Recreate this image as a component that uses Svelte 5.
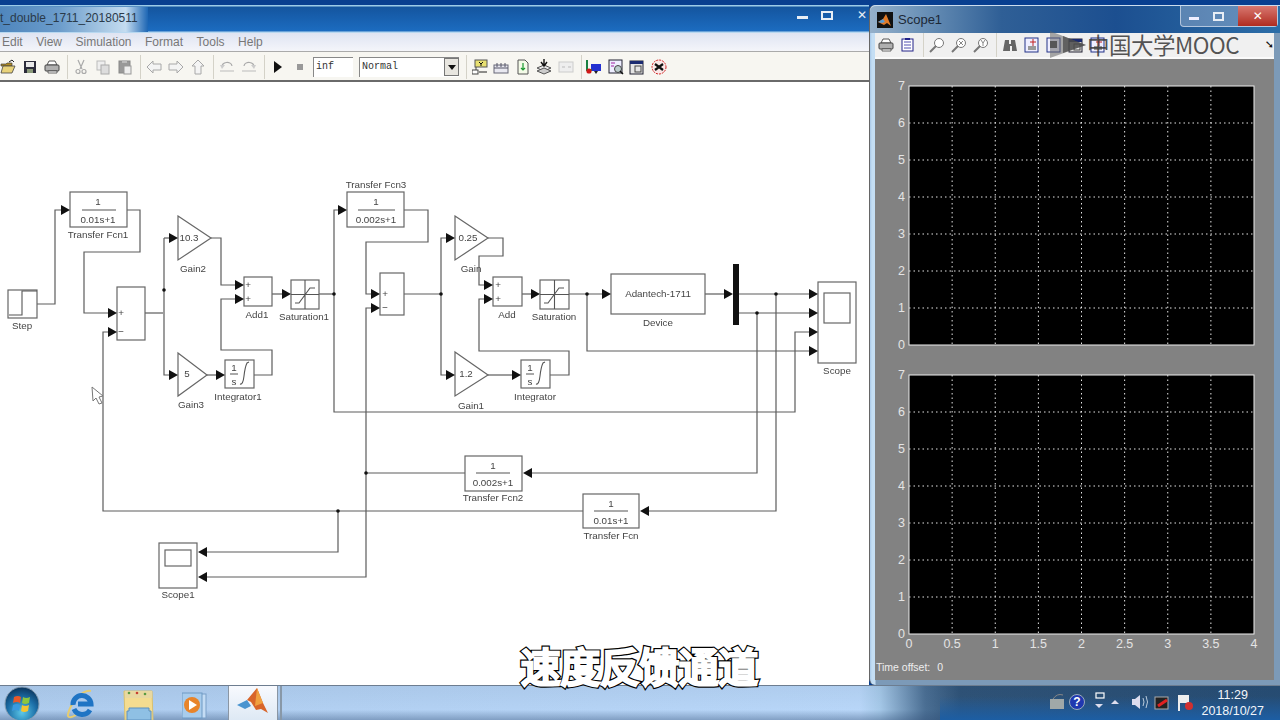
<script lang="ts">
	const svg = (body: string, w = 16, h = 16) =>
		`<svg width="${w}" height="${h}" viewBox="0 0 ${w} ${h}">${body}</svg>`;

	const menuItems = ['Edit', 'View', 'Simulation', 'Format', 'Tools', 'Help'];

	const icons = {
		open: svg('<path d="M1 5h5l1-1h5v3H1z" fill="#b08a20" stroke="#444" stroke-width=".7"/><path d="M1 14l2-7h12l-3 7z" fill="#e8d27a" stroke="#444" stroke-width=".8"/><path d="M9 3l3-2 2 2" fill="none" stroke="#222"/>'),
		save: svg('<rect x="2" y="2" width="12" height="12" fill="#2b2b3a"/><rect x="4" y="3" width="8" height="5" fill="#e8e8e8"/><rect x="5" y="10" width="6" height="4" fill="#8a9a7a"/>'),
		print: svg('<path d="M5 2h6l2 4H3z" fill="#fff" stroke="#444" stroke-width=".9"/><rect x="1" y="6" width="14" height="6" rx="1" fill="#b0b0b0" stroke="#444"/><path d="M4 12h9v2H4z" fill="#fff" stroke="#444" stroke-width=".8"/>'),
		cut: svg('<path d="M5 1l4 9M11 1L7 10" stroke="#aaa" stroke-width="1.2" fill="none"/><circle cx="5" cy="12.500" r="2" fill="none" stroke="#aaa" stroke-width="1.2"/><circle cx="11" cy="12.500" r="2" fill="none" stroke="#aaa" stroke-width="1.2"/>'),
		copy: svg('<rect x="2" y="2" width="8" height="9" fill="#eee" stroke="#bbb"/><rect x="6" y="6" width="8" height="9" fill="#ddd" stroke="#aaa"/>'),
		paste: svg('<rect x="2" y="2" width="11" height="12" fill="#999" stroke="#888"/><rect x="5" y="1" width="5" height="3" fill="#bbb"/><rect x="7" y="7" width="7" height="8" fill="#eee" stroke="#999"/>'),
		back: svg('<path d="M1 8l6-6v3h8v6H7v3z" fill="#f4f4f4" stroke="#a8a8a8"/>'),
		forward: svg('<path d="M15 8L9 2v3H1v6h8v3z" fill="#f4f4f4" stroke="#a8a8a8"/>'),
		up: svg('<path d="M8 1l6 6h-3v8H5V7H2z" fill="#f4f4f4" stroke="#a8a8a8"/>'),
		undo: svg('<path d="M3 8a5 4 0 0 1 10-1" fill="none" stroke="#aaa" stroke-width="1.2"/><path d="M1 6h5L3 10z" fill="#ccc"/><path d="M1 12h14" stroke="#bbb"/>'),
		redo: svg('<path d="M13 8A5 4 0 0 0 3 7" fill="none" stroke="#aaa" stroke-width="1.2"/><path d="M15 6h-5l3 4z" fill="#ccc"/><path d="M1 12h14" stroke="#bbb"/>'),
		play: svg('<path d="M4 2l8 6-8 6z" fill="#111"/>'),
		stop: svg('<rect x="5" y="5" width="6" height="6" fill="#999"/>'),
		library: svg('<rect x="3" y="1" width="12" height="7" fill="#e8e070" stroke="#555"/><path d="M7 3l2 2 2-2M9 5v2" stroke="#111" fill="none"/><rect x="0" y="11" width="6" height="4" fill="#fff" stroke="#444"/><path d="M7 13h8" stroke="#222"/><path d="M4 8v3" stroke="#444"/>'),
		explorer: svg('<rect x="1" y="6" width="14" height="8" fill="#e8e8f0" stroke="#667"/><path d="M1 9h14M4 4v4M8 4v4M12 4v4" stroke="#556" fill="none"/>'),
		update: svg('<path d="M3 1h7l3 3v11H3z" fill="#f4fbe8" stroke="#555"/><path d="M8 4v7M6 9l2 2 2-2" stroke="#1a9a30" fill="none" stroke-width="1.2"/>'),
		build: svg('<path d="M8 6l7 3-7 3-7-3z" fill="#e8e8e8" stroke="#555"/><path d="M8 9l7 3-7 3-7-3z" fill="#ccc" stroke="#555"/><path d="M8 0v6M5 3l3 4 3-4" stroke="#111" fill="none" stroke-width="1.4"/>'),
		grid: svg('<rect x="1" y="3" width="14" height="10" fill="#eee" stroke="#ccc"/><path d="M4 8h3M10 8h3" stroke="#bbb"/>'),
		model: svg('<rect x="5" y="5" width="10" height="7" fill="#2330d0"/><path d="M1 1v10h5" stroke="#1a8040" stroke-width="2" fill="none"/><circle cx="3" cy="12" r="2.600" fill="#d01818"/><path d="M8 12l2 3 2-3z" fill="#222"/>'),
		search: svg('<rect x="1" y="1" width="13" height="13" fill="#eef" stroke="#223"/><path d="M3 4h4M3 7h3" stroke="#a020a0"/><circle cx="10" cy="10" r="3.500" fill="#bcc" stroke="#444"/><path d="M12 12l3 3" stroke="#111" stroke-width="1.500"/>'),
		settings: svg('<rect x="1" y="2" width="13" height="13" fill="#e4e4e4" stroke="#223"/><rect x="1" y="2" width="13" height="3" fill="#1a2a70"/><rect x="6" y="7" width="6" height="6" fill="none" stroke="#444"/>'),
		debug: svg('<circle cx="8" cy="8" r="7" fill="#fbe8e8" stroke="#d02020" stroke-dasharray="2 1"/><path d="M4 5l8 6M12 5l-8 6" stroke="#111" stroke-width="2.200"/>'),
		sprint: svg('<rect x="2" y="2" width="11" height="12" fill="#fff" stroke="#222288"/><path d="M4 5h7M4 8h7M4 11h7" stroke="#5050b0"/><rect x="5" y="1" width="5" height="2" fill="#222288"/>'),
		zoomIn: svg('<circle cx="10" cy="6" r="4.500" fill="#fff" stroke="#777"/><path d="M7 9l-6 6" stroke="#777" stroke-width="2"/>'),
		zoomX: svg('<circle cx="10" cy="6" r="4.500" fill="#fff" stroke="#777"/><path d="M7 9l-6 6" stroke="#777" stroke-width="2"/><path d="M8 4l4 4M12 4l-4 4" stroke="#888"/>'),
		zoomY: svg('<circle cx="10" cy="6" r="4.500" fill="#fff" stroke="#777"/><path d="M7 9l-6 6" stroke="#777" stroke-width="2"/><path d="M8 3l2 3 2-3M10 6v3" stroke="#888" fill="none"/>'),
		binoculars: svg('<path d="M3 3h4v4h2V3h4l2 11h-5V9H8v5H1z" fill="#666"/>'),
		params: svg('<rect x="1" y="1" width="13" height="14" fill="#eef" stroke="#223388"/><path d="M6 5h6M9 2v7" stroke="#c02020"/><rect x="4" y="9" width="8" height="4" fill="#999"/>'),
		saveAxes: svg('<rect x="1" y="1" width="13" height="14" fill="#eef" stroke="#223388"/><rect x="4" y="4" width="7" height="7" fill="#444"/>')
	};

	const groups = [
		['open', 'save', 'print'],
		['cut', 'copy', 'paste'],
		['back', 'forward', 'up'],
		['undo', 'redo'],
		['play', 'stop']
	];
	const rightGroups = [
		['library', 'explorer', 'update', 'build', 'grid'],
		['model', 'search', 'settings', 'debug']
	];
	const scopeGroups = [
		['print', 'sprint'],
		['zoomIn', 'zoomX', 'zoomY'],
		['binoculars', 'params', 'saveAxes', 'settings', 'params']
	];

	// diagram, in screen coordinates
	const boxes = [
		[70, 192, 57, 35], [8, 290, 29, 28], [117, 287, 28, 53], [244, 277, 28, 29],
		[291, 280, 28, 29], [225, 360, 29, 28], [347, 192, 57, 35], [380, 273, 24, 42],
		[493, 277, 29, 29], [540, 280, 29, 29], [521, 360, 29, 28], [611, 274, 94, 40],
		[818, 282, 38, 81], [824, 293, 26, 30], [465, 456, 57, 35], [583, 494, 56, 34],
		[159, 543, 38, 45], [165, 550, 26, 16]
	];
	const triangles = [
		'178,216 211,238 178,260', '178,353 207,375 178,396',
		'455,216 488,238 455,260', '455,352 488,375 455,396'
	];
	const wires = [
		'37,304 55,304 55,210 62,210',
		'127,210 140,210 140,252 84,252 84,313 110,313',
		'145,313 163,313',
		'164,238 170,238', '170,375 164,375 164,238',
		'211,238 221,238 221,285 236,285',
		'236,299 221,299 221,350 272,350 272,375 254,375',
		'207,375 217,375',
		'272,294 283,294',
		'319,294 334,294',
		'340,210 334,210 334,412 795,412 795,332 810,332',
		'404,210 428,210 428,242 366,242 366,294 372,294',
		'372,308 366,308 366,577 206,577',
		'404,294 441,294',
		'447,238 441,238 441,375 447,375',
		'488,238 503,238 503,256 479,256 479,285 485,285',
		'485,299 479,299 479,351 569,351 569,375 550,375',
		'488,375 513,375',
		'522,294 532,294',
		'569,294 603,294',
		'587,294 587,351 809,351',
		'705,294 724,294',
		'738,294 809,294',
		'738,313 809,313',
		'757,313 757,473 531,473',
		'465,473 366,473',
		'776,294 776,511 648,511',
		'583,511 103,511 103,332 110,332',
		'338,511 338,552 206,552'
	];
	const rightArrows = [
		[70, 210], [117, 313], [117, 332], [178, 238], [178, 375], [244, 285], [244, 299],
		[225, 375], [291, 294], [347, 210], [380, 294], [380, 308], [455, 238], [455, 375],
		[493, 285], [493, 299], [521, 375], [540, 294], [611, 294], [733, 294],
		[818, 294], [818, 313], [818, 332], [818, 351]
	];
	const leftArrows = [[523, 473], [640, 511], [198, 552], [198, 577]];
	const dots = [
		[164, 290], [334, 294], [441, 294], [587, 294], [776, 294], [757, 313], [366, 473], [338, 511]
	];
	const rules = [[82, 116, 210], [358, 395, 210], [476, 510, 473], [594, 628, 511]];
	const labels = [
		['Step', 22, 329], ['Transfer Fcn1', 98, 238], ['Gain2', 193, 272], ['Gain3', 191, 408],
		['Add1', 257, 318], ['Saturation1', 304, 320], ['Integrator1', 238, 400],
		['Transfer Fcn3', 376, 188], ['Gain', 471, 272], ['Add', 507, 318], ['Saturation', 554, 320],
		['Gain1', 471, 409], ['Integrator', 535, 400], ['Device', 658, 326], ['Scope', 837, 374],
		['Transfer Fcn2', 493, 501], ['Transfer Fcn', 611, 539], ['Scope1', 178, 598],
		['1', 98, 205], ['0.01s+1', 98, 223], ['1', 376, 205], ['0.002s+1', 376, 223],
		['1', 493, 469], ['0.002s+1', 493, 486], ['1', 611, 507], ['0.01s+1', 611, 524],
		['10.3', 189, 241], ['5', 187, 377], ['0.25', 468, 241], ['1.2', 466, 377],
		['Adantech-1711', 658, 297]
	];
	const signs = [
		['+', 121, 316], ['−', 121, 335], ['+', 248, 288], ['+', 248, 302],
		['+', 385, 297], ['−', 385, 311], ['+', 498, 288], ['+', 498, 302]
	];

	const xTicks = [0, 0.5, 1, 1.5, 2, 2.5, 3, 3.5, 4];
	const yTicks = [0, 1, 2, 3, 4, 5, 6, 7];
	const plotWidth = 345;
	const plotHeight = 259;
	const px = (t: number) => 34 + (t / 4) * plotWidth;
	const py = (v: number) => 10 + plotHeight - (v / 7) * plotHeight;
</script>

<div class="desktop">
	<section class="model">
		<header class="titlebar">
			<span class="glow">t_double_1711_20180511</span>
			<div class="controls">
				<span class="min"></span>
				<span class="max"></span>
				<span class="close">✕</span>
			</div>
		</header>
		<nav class="menu">
			{#each menuItems as item}
				<span>{item}</span>
			{/each}
		</nav>
		<div class="toolbar">
			{#each groups as group, i}
				{#if i > 0}<i class="sep"></i>{/if}
				{#each group as name}
					<span class="tool">{@html icons[name]}</span>
				{/each}
			{/each}
			<span class="field time">inf</span>
			<span class="field mode">Normal<b class="drop"></b></span>
			{#each rightGroups as group, i}
				<i class="sep" class:wide={i === 0}></i>
				{#each group as name}
					<span class="tool slim">{@html icons[name]}</span>
				{/each}
			{/each}
		</div>
		<div class="canvas">
			<svg class="diagram" width="869" height="603" viewBox="0 82 869 603">
				<g fill="none" stroke="#5c5c5c" stroke-width="1.2">
					{#each wires as points}
						<polyline {points} />
					{/each}
				</g>
				<g fill="#fff" stroke="#666" stroke-width="1.200">
					{#each boxes as [x, y, width, height]}
						<rect {x} {y} {width} {height} />
					{/each}
					{#each triangles as points}
						<polygon {points} />
					{/each}
				</g>
				<g fill="none" stroke="#555" stroke-width="1.100">
					{#each rules as [a, b, y]}
						<line x1={a} x2={b} y1={y} y2={y} />
					{/each}
					<path d="M9 315H22V291H37" />
					<path d="M291 294.500H319M305 280V309M295 303h4l11-15h5" />
					<path d="M540 294.500H569M554.500 280V309M544 303h4l11-15h5" />
					<path d="M230 374h8M526 374h8" />
					<path d="M240 384q3 1 4-8t3-13l2-1M536 384q3 1 4-8t3-13l2-1" />
				</g>
				<g fill="#111">
					{#each rightArrows as [x, y]}
						<path d="M{x - 9} {y - 5}L{x} {y}L{x - 9} {y + 5}Z" />
					{/each}
					{#each leftArrows as [x, y]}
						<path d="M{x + 9} {y - 5}L{x} {y}L{x + 9} {y + 5}Z" />
					{/each}
					{#each dots as [cx, cy]}
						<circle {cx} {cy} r="1.800" />
					{/each}
					<rect x="733" y="264" width="6" height="61" />
				</g>
				<g class="blocktext" text-anchor="middle">
					{#each labels as [text, x, y]}
						<text {x} {y}>{text}</text>
					{/each}
					{#each signs as [text, x, y]}
						<text {x} {y}>{text}</text>
					{/each}
					<text x="234" y="371">1</text>
					<text x="234" y="385">s</text>
					<text x="530" y="371">1</text>
					<text x="530" y="385">s</text>
				</g>
				<path d="M92 387l1 14 3-3 3 6 3-1-3-6 4-1z" fill="#fff" stroke="#777" />
			</svg>
		</div>
	</section>

	<section class="scope">
		<header class="scope-title">
			<span class="scope-logo">
				<svg width="16" height="16" viewBox="0 0 16 16">
					<rect width="16" height="16" fill="#111" />
					<path d="M1 10l5-3 3-5 5 12-4-3-3 2z" fill="#e07a28" />
					<path d="M1 10l5-3 2 3-3 1z" fill="#5a9ad0" />
				</svg>
			</span>
			<span>Scope1</span>
			<div class="scope-controls">
				<span class="min"></span>
				<span class="max"></span>
				<span class="close red">✕</span>
			</div>
		</header>
		<div class="scope-tools">
			{#each scopeGroups as group, i}
				{#if i > 0}<i class="sep"></i>{/if}
				{#each group as name}
					<span class="tool">{@html icons[name]}</span>
				{/each}
			{/each}
			<span class="dock">➘</span>
		</div>
		<div class="scope-body">
			{#each [0, 1] as plot}
				<svg class="plot" width="399" height={plot ? 290 : 289}>
					<rect x="34" y="10" width={plotWidth} height={plotHeight} fill="#000" stroke="#eee" />
					<g stroke="#e4e4e4" stroke-dasharray="1.500 3">
						{#each xTicks.slice(1, -1) as t}
							<line x1={px(t)} x2={px(t)} y1="10" y2={10 + plotHeight} />
						{/each}
						{#each yTicks.slice(1, -1) as v}
							<line x1="34" x2={34 + plotWidth} y1={py(v)} y2={py(v)} />
						{/each}
					</g>
					<g class="ticks">
						{#each yTicks as v}
							<text x="30" y={py(v) + 4} text-anchor="end">{v}</text>
						{/each}
						{#if plot}
							{#each xTicks as t}
								<text x={px(t)} y={10 + plotHeight + 14} text-anchor="middle">{t}</text>
							{/each}
						{/if}
					</g>
				</svg>
			{/each}
			<div class="offset"><span>Time offset:</span><span>0</span></div>
		</div>
	</section>

	<div class="watermark">
		<svg width="37" height="27" viewBox="0 0 37 27">
			<path d="M0 0L36 14L0 27z" fill="#666" opacity=".55" />
			<path d="M13 5L36 14L13 22z" fill="#444" opacity=".7" />
		</svg>
		<span>中国大学MOOC</span>
	</div>

	<footer class="taskbar">
		<div class="apps">
			<span class="orb">
				<svg width="36" height="36" viewBox="0 0 36 36">
					<defs>
						<radialGradient id="orb" cx=".5" cy=".75" r=".7">
							<stop offset="0" stop-color="#5cc8e8" />
							<stop offset=".6" stop-color="#1c6fa8" />
							<stop offset="1" stop-color="#0e3c66" />
						</radialGradient>
					</defs>
					<circle cx="18" cy="18" r="17" fill="url(#orb)" stroke="#8aa0b4" />
					<path d="M10 11q4-2 7 0l-1 6q-3-2-7 0z" fill="#e8582a" />
					<path d="M19 11q3 2 7 0l-1 6q-4 2-7 0z" fill="#8cc63e" />
					<path d="M9 19q4-2 7 0l-1 6q-3-2-7 0z" fill="#3a9ae0" />
					<path d="M18 19q3 2 7 0l-1 6q-4 2-7 0z" fill="#f4c430" />
				</svg>
			</span>
			<span class="app ie">
				<svg width="32" height="32" viewBox="0 0 32 32">
					<path d="M26 3C18 1 6 14 3 26c-1 4 3 4 8 1" fill="none" stroke="#e6cc70" stroke-width="2" />
					<path d="M8 17a9 9 0 0 1 18-1H13M25 22a9 9 0 0 1-16-1" fill="none" stroke="#1f74c4" stroke-width="5" />
				</svg>
			</span>
			<span class="app folder">
				<svg width="32" height="32" viewBox="0 0 32 32">
					<path d="M1 3h28l1 29H2z" fill="#f4dc90" stroke="#d8c070" />
					<path d="M2 3h27v7H2z" fill="#e8d8a0" />
					<circle cx="6" cy="5" r="1.300" fill="#5a9a40" />
					<circle cx="14" cy="5" r="1.300" fill="#c84030" />
					<circle cx="22" cy="6" r="1.300" fill="#5a9a40" />
					<path d="M6 20h20v3h2v9H4v-9h2z" fill="#8fc0e4" stroke="#5a90c0" />
				</svg>
			</span>
			<span class="app wmp">
				<svg width="26" height="28" viewBox="0 0 26 28">
					<rect x="3" y="2" width="21" height="24" fill="#c4dcf4" stroke="#7aa0c8" />
					<rect x="0" y="1" width="20" height="25" fill="#a8ccec" stroke="#6f9ac4" />
					<circle cx="10" cy="13" r="8" fill="#e8842a" />
					<path d="M7 8l8 5-8 5z" fill="#fff" />
				</svg>
			</span>
			<span class="app active">
				<svg width="32" height="30" viewBox="0 0 32 30">
					<path d="M0 17l10-5 4 6-6 3z" fill="#4a94d0" />
					<path d="M10 12l5-6 5-6 6 15 5 10-7-4-5 1-5-8z" fill="#d8652a" />
					<path d="M20 0l6 15-8 3z" fill="#f0a040" />
				</svg>
			</span>
			<i class="divider"></i>
		</div>
		<div class="tray">
			<svg width="152" height="24" viewBox="0 0 152 24">
				<rect x="1" y="8" width="14" height="10" fill="#a0a8a8" />
				<path d="M4 8q4-6 10-4" stroke="#888" fill="none" />
				<circle cx="28" cy="11" r="7.500" fill="#2038b0" stroke="#9ab" />
				<text x="28" y="15" class="help" text-anchor="middle">?</text>
				<rect x="47" y="2" width="8" height="5" fill="none" stroke="#fff" stroke-width="1.200" />
				<path d="M46 13h8l-4 4z" fill="#dde" />
				<path d="M62 13h8l-4-4z" fill="#dde" />
				<path d="M83 8h3l5-4v14l-5-4h-3z" fill="#dde" />
				<path d="M94 7q2 4 0 8M97 5q3 6 0 12" stroke="#bcd" fill="none" />
				<rect x="106" y="6" width="13" height="12" fill="#222" stroke="#aaa" />
				<path d="M109 15l9-6" stroke="#e02020" stroke-width="3" />
				<path d="M130 4v16" stroke="#eee" stroke-width="2" />
				<path d="M131 4h9v8h-9z" fill="#eee" />
				<circle cx="140" cy="15" r="4" fill="#d03030" />
			</svg>
			<div class="clock"><span>11:29</span><span>2018/10/27</span></div>
		</div>
	</footer>

	<div class="subtitle" data-text="速度反馈通道">速度反馈通道</div>
</div>

<style>
	.desktop {
		position: relative;
		width: 1280px;
		height: 720px;
		overflow: hidden;
		font-family: "Liberation Sans", Arial, sans-serif;
		background: #083f90;
	}

	.model {
		display: flex;
		flex-direction: column;
		width: 869px;
		height: 685px;
	}

	.titlebar {
		display: flex;
		justify-content: space-between;
		flex: none;
		height: 33px;
		box-sizing: border-box;
		padding-top: 7px;
		background: linear-gradient(#083f90 0, #083f90 5px, #9ccbe8 5px, #9ccbe8 6px, #14559f 7px, #1c6cc0 31px, #b8d8f0 32px);
	}

	.glow {
		height: 25px;
		padding: 4px 10px 0 0;
		box-sizing: border-box;
		font-size: 12px;
		color: #2a3a4a;
		background: linear-gradient(90deg, #4f86bd 0, #6b9ccb 40%, #a8c8e4 70%, #c4dcf0 85%, #1d66b4 100%);
	}

	.controls {
		display: flex;
		align-items: center;
		height: 16px;
		margin-right: 2px;
	}

	.min {
		display: block;
		width: 11px;
		height: 3px;
		margin: 5px 13px 0 0;
		background: #e8eef5;
	}

	.max {
		display: block;
		width: 8px;
		height: 5px;
		border: 2px solid #e8eef5;
		margin-right: 24px;
	}

	.close {
		color: #e8eef5;
		font-size: 12px;
		font-weight: 700;
		font-family: "DejaVu Sans", sans-serif;
	}

	.menu {
		display: flex;
		flex: none;
		gap: 13.500px;
		height: 19px;
		box-sizing: border-box;
		padding: 1px 0 0 2px;
		font-size: 12px;
		line-height: 17px;
		color: #777;
		background: linear-gradient(#dfe4f2, #f4f5fa);
		border-bottom: 1px solid #aaa;
	}

	.toolbar {
		display: flex;
		flex: none;
		align-items: center;
		height: 30px;
		box-sizing: border-box;
		padding-top: 1px;
		background: #f7f6f1;
		border-bottom: 2px solid #6a6a6a;
	}

	.toolbar > .tool:first-child {
		margin-left: -3px;
	}

	.tool {
		display: flex;
		justify-content: center;
		flex: none;
		width: 22px;
	}

	.tool.slim {
		width: 21.500px;
	}

	.sep {
		flex: none;
		width: 1px;
		height: 24px;
		margin: 0 2px 0 4px;
		background: #d4d2c8;
	}

	.sep.wide {
		margin-left: 7px;
	}

	.field {
		flex: none;
		box-sizing: border-box;
		height: 20px;
		padding: 3px 0 0 2px;
		font-family: "Liberation Mono", monospace;
		font-size: 10px;
		color: #333;
		background: #fff;
		border-top: 1px solid #888;
		border-left: 1px solid #888;
	}

	.time {
		width: 40px;
		margin-left: 2px;
	}

	.mode {
		position: relative;
		width: 100px;
		margin-left: 6px;
	}

	.drop {
		position: absolute;
		top: 0;
		right: 0;
		width: 15px;
		height: 18px;
		background: #e8e6e0;
		border: 1px solid #777;
		box-sizing: border-box;
	}

	.drop::after {
		content: "";
		position: absolute;
		left: 3px;
		top: 6px;
		border: 4px solid transparent;
		border-top: 5px solid #111;
	}

	.canvas {
		flex: 1;
		overflow: hidden;
		background: #fff;
	}

	.diagram {
		display: block;
		filter: blur(0.35px);
	}

	.blocktext text {
		font-size: 9.800px;
		fill: #444;
	}

	.scope {
		position: absolute;
		left: 869px;
		top: 5px;
		width: 411px;
		height: 680px;
		box-sizing: border-box;
		display: flex;
		flex-direction: column;
		padding: 0 6px 5px 5px;
		background: linear-gradient(90deg, #a8c8e8, #c4def4 2px, #c4def4 5px, #7c9ab8 6px);
		border-left: 1px solid #666;
		border-radius: 6px 0 0 6px;
	}

	.scope-title {
		position: relative;
		display: flex;
		align-items: center;
		gap: 5px;
		flex: none;
		height: 28px;
		box-sizing: border-box;
		margin: 0 -6px 0 -5px;
		padding: 0 0 0 7px;
		font-size: 13px;
		color: #1c2836;
		background: linear-gradient(90deg, #95b0ca 0, #6d93b8 12%, #2f5f96 32%, #1c4f90 60%, #2c6ea8 100%);
		border-top: 1px solid #cde;
		border-radius: 6px 0 0 0;
	}

	.scope-controls {
		position: absolute;
		top: 0;
		right: 2px;
		display: flex;
		align-items: center;
		width: 96px;
		height: 20px;
		background: rgba(200, 210, 225, 0.35);
		border: 1px solid rgba(235, 240, 250, 0.6);
		border-top: 0;
		border-radius: 0 0 4px 4px;
	}

	.scope-controls .min {
		margin: 5px 14px 0 8px;
		background: #eef;
	}

	.scope-controls .max {
		margin-right: 14px;
	}

	.red {
		width: 42px;
		text-align: center;
		line-height: 20px;
		background: linear-gradient(#d87870, #b02c20);
		color: #fff;
	}

	.scope-logo {
		display: flex;
	}

	.scope-tools {
		position: relative;
		display: flex;
		align-items: center;
		flex: none;
		height: 26px;
		box-sizing: border-box;
		background: #f0f0f0;
		border-bottom: 2px solid #fafafa;
	}

	.dock {
		position: absolute;
		right: 0;
		top: 5px;
		font-size: 11px;
		font-family: "DejaVu Sans", sans-serif;
		color: #111;
	}

	.scope-body {
		flex: 1;
		padding-top: 17px;
		background: #828282;
	}

	.plot {
		display: block;
	}

	.ticks text {
		font-size: 12.500px;
		fill: #e4e4e4;
	}

	.offset {
		display: flex;
		gap: 7px;
		margin: 6px 0 0 1px;
		font-size: 10.500px;
		line-height: 13px;
		color: #eee;
	}

	.watermark {
		position: absolute;
		left: 1050px;
		top: 31px;
		display: flex;
		align-items: center;
		height: 27px;
		font-size: 22.500px;
		line-height: 27px;
		color: rgba(55, 55, 55, 0.85);
		font-family: "Noto Sans CJK SC", "Noto Sans", sans-serif;
		letter-spacing: -0.500px;
	}

	.subtitle {
		position: absolute;
		left: 521px;
		top: 643px;
		font-size: 39.500px;
		line-height: 44px;
		white-space: nowrap;
		font-family: "Noto Sans CJK SC", sans-serif;
		color: #000;
		-webkit-text-stroke: 5.600px #000;
	}

	.subtitle::after {
		content: attr(data-text);
		position: absolute;
		left: 0;
		top: 0;
		color: #222;
		-webkit-text-stroke: 3.200px #fff;
	}

	.taskbar {
		position: absolute;
		left: 0;
		right: 0;
		bottom: 0;
		display: flex;
		justify-content: space-between;
		height: 35px;
		overflow: hidden;
		border-top: 1px solid #6d7d90;
		box-sizing: border-box;
		background:
			linear-gradient(rgba(28, 94, 164, 0), rgba(28, 94, 164, 0) 30%, #1c5ea4) no-repeat right / 340px 100%,
			linear-gradient(rgba(20, 40, 60, 0.05) 0, rgba(20, 40, 60, 0) 70%, rgba(50, 80, 120, 0.4) 100%),
			linear-gradient(90deg, #aeccee 0, #b8d6f8 860px, #a5c8e8 880px, #4b6f94 925px, #2f5378 960px, #274d74 1270px);
	}

	.apps {
		display: flex;
		align-items: flex-start;
	}

	.orb {
		width: 44px;
		padding-left: 4px;
		box-sizing: border-box;
	}

	.app {
		display: flex;
		justify-content: center;
		padding-top: 2px;
	}

	.ie {
		width: 60px;
		margin-left: 7px;
	}

	.folder {
		width: 56px;
	}

	.wmp {
		width: 56px;
		padding-top: 6px;
	}

	.active {
		width: 48px;
		height: 34px;
		margin-left: 5px;
		background: linear-gradient(#f8fafe, #dce8f4);
		border: 1px solid #8a96a4;
		border-width: 0 1px;
	}

	.divider {
		width: 2px;
		height: 34px;
		margin-left: 2px;
		background: #8898a8;
	}

	.tray {
		display: flex;
		align-items: center;
		padding-right: 16px;
	}

	.help {
		font-size: 12px;
		font-weight: 700;
		fill: #fff;
	}

	.clock {
		display: flex;
		flex-direction: column;
		align-items: center;
		font-size: 12.500px;
		line-height: 16px;
		color: #f2f6fa;
	}
</style>
